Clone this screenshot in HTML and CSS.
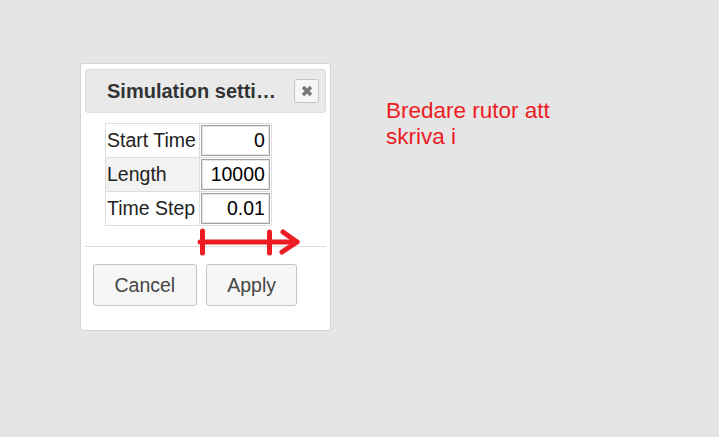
FILE: index.html
```html
<!DOCTYPE html>
<html>
<head>
<meta charset="utf-8">
<link rel="stylesheet" href="styles.css">
</head>
<body>
<div class="page">
  <div class="dialog">
    <div class="titlebar">
      <span class="title">Simulation setti…</span>
      <button class="close" title="Close">
        <svg width="12" height="12" viewBox="0 0 12 12"><path d="M2 2 L10 10 M10 2 L2 10" stroke="#777777" stroke-width="3.4" stroke-linecap="butt"/></svg>
      </button>
    </div>
    <div class="content">
      <table class="settings">
        <tr><td class="label">Start Time</td><td class="field"><input type="text" value="0"></td></tr>
        <tr class="alt"><td class="label">Length</td><td class="field"><input type="text" value="10000"></td></tr>
        <tr><td class="label">Time Step</td><td class="field"><input type="text" value="0.01"></td></tr>
      </table>
    </div>
    <div class="buttonpane">
      <button class="btn">Cancel</button>
      <button class="btn">Apply</button>
    </div>
  </div>
  <div class="note">Bredare rutor att<br>skriva i</div>
  <svg class="arrow" width="110" height="35" viewBox="0 0 110 35">
    <g stroke="#ed1c24" stroke-width="5" stroke-linecap="round" stroke-linejoin="round" fill="none">
      <path d="M5 17 L102 17"/>
      <path d="M7.5 6 L7.5 28"/>
      <path d="M74.5 7 L74.5 28"/>
      <path d="M88 7 L102 17 L87 27"/>
    </g>
  </svg>
</div>
</body>
</html>
```

FILE: styles.css
```css
html, body {
  margin: 0;
  padding: 0;
  background: #e5e5e5;
  font-family: "Liberation Sans", Arial, sans-serif;
}

.page {
  position: relative;
  display: flex;
  align-items: flex-start;
  padding: 63px 0 0 80px;
  height: 374px;
}

.dialog {
  width: 251px;
  box-sizing: border-box;
  background: #fff;
  border: 1px solid #d3d3d3;
  border-radius: 3px;
  padding: 5px 4px 0 4px;
  height: 268px;
}

.titlebar {
  display: flex;
  align-items: center;
  justify-content: space-between;
  height: 44px;
  box-sizing: border-box;
  border: 1px solid #dddddd;
  background: #e9e9e9;
  border-radius: 3px;
  padding: 0 6px 0 21px;
}

.title {
  display: block;
  font-size: 20px;
  font-weight: bold;
  color: #333333;
  white-space: nowrap;
}

.close {
  width: 25px;
  height: 24px;
  box-sizing: border-box;
  border: 1px solid #c5c5c5;
  border-radius: 3px;
  background: #f6f6f6;
  padding: 0;
  display: flex;
  align-items: center;
  justify-content: center;
}

.content {
  padding: 10px 20px 20px 20px;
}

.settings {
  border-collapse: collapse;
  border: 1px solid #dddddd;
  font-size: 19.5px;
}

.settings td {
  border: 1px solid #dddddd;
  padding: 1px;
  white-space: nowrap;
  color: #222;
}

.settings td.label {
  padding: 0 3px 0 1px;
}

.settings tr.alt td.label {
  background: #f2f2f2;
}

.settings input {
  display: block;
  width: 69px;
  height: 31px;
  box-sizing: border-box;
  border: 1px solid #a0a0a0;
  box-shadow: inset 0 0 0 1px #e6e6e6;
  padding: 0 4px 0 0;
  margin: 0;
  text-align: right;
  font-family: "Liberation Sans", Arial, sans-serif;
  font-size: 19.5px;
  color: #000;
  background: #fff;
}

.buttonpane {
  border-top: 1px solid #dddddd;
  display: flex;
  gap: 9px;
  padding: 17px 0 0 8px;
}

.btn {
  height: 42px;
  box-sizing: border-box;
  border: 1px solid #c5c5c5;
  border-radius: 3px;
  background: #f6f6f6;
  color: #454545;
  font-family: "Liberation Sans", Arial, sans-serif;
  font-size: 19.5px;
  padding: 0 20.5px;
}

.note {
  margin: 35px 0 0 55px;
  color: #ed1c24;
  font-size: 22.5px;
  line-height: 26px;
}

.arrow {
  position: absolute;
  left: 195px;
  top: 225px;
}
```
